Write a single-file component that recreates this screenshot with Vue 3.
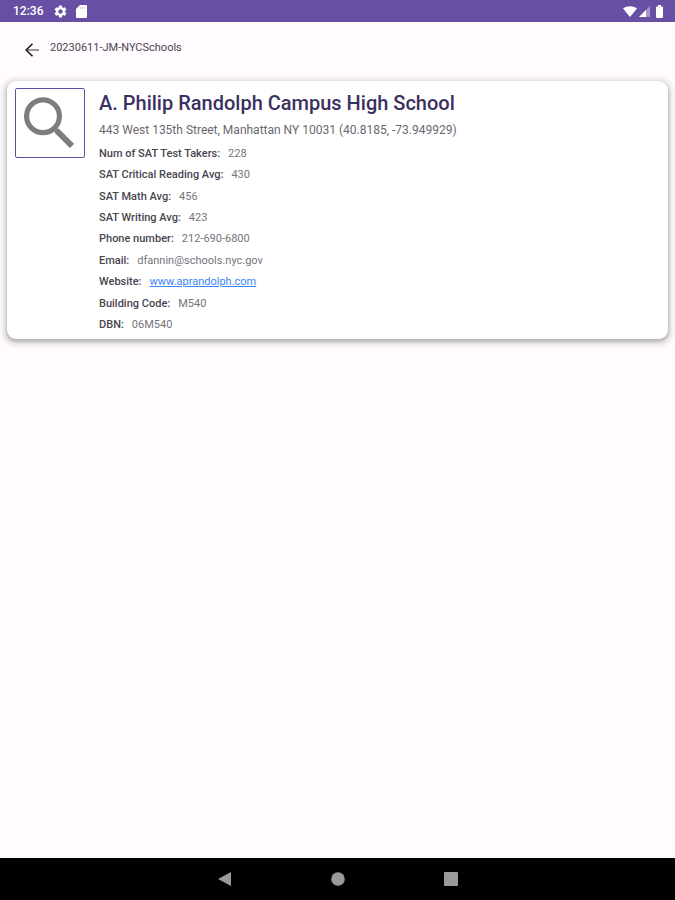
<script setup>
const school = {
  name: 'A. Philip Randolph Campus High School',
  address: '443 West 135th Street, Manhattan NY 10031 (40.8185, -73.949929)',
}

const details = [
  { label: 'Num of SAT Test Takers:', value: '228' },
  { label: 'SAT Critical Reading Avg:', value: '430' },
  { label: 'SAT Math Avg:', value: '456' },
  { label: 'SAT Writing Avg:', value: '423' },
  { label: 'Phone number:', value: '212-690-6800' },
  { label: 'Email:', value: 'dfannin@schools.nyc.gov' },
  { label: 'Website:', value: 'www.aprandolph.com', href: 'http://www.aprandolph.com' },
  { label: 'Building Code:', value: 'M540' },
  { label: 'DBN:', value: '06M540' },
]
</script>

<template>
  <div class="screen">
    <div class="status">
      <span class="clock">12:36</span>
      <svg class="gear" viewBox="0 0 24 24" width="15" height="15" aria-hidden="true">
        <path fill="#fff" d="M19.14 12.94c.04-.3.06-.61.06-.94 0-.32-.02-.64-.07-.94l2.03-1.58c.18-.14.23-.41.12-.61l-1.92-3.32c-.12-.22-.37-.29-.59-.22l-2.39.96c-.5-.38-1.03-.7-1.62-.94l-.36-2.54c-.04-.24-.24-.41-.48-.41h-3.84c-.24 0-.43.17-.47.41l-.36 2.54c-.59.24-1.13.57-1.62.94l-2.39-.96c-.22-.08-.47 0-.59.22L2.74 8.87c-.12.21-.08.47.12.61l2.03 1.58c-.05.3-.09.63-.09.94s.02.64.07.94l-2.03 1.58c-.18.14-.23.41-.12.61l1.92 3.32c.12.22.37.29.59.22l2.39-.96c.5.38 1.03.7 1.62.94l.36 2.54c.05.24.24.41.48.41h3.84c.24 0 .44-.17.47-.41l.36-2.54c.59-.24 1.13-.56 1.62-.94l2.39.96c.22.08.47 0 .59-.22l1.92-3.32c.12-.22.07-.47-.12-.61l-2.01-1.58zM12 15.6c-1.98 0-3.6-1.62-3.6-3.6s1.62-3.6 3.6-3.6 3.6 1.62 3.6 3.6-1.62 3.6-3.6 3.6z" />
      </svg>
      <svg class="sdcard" viewBox="0 0 11 13" width="11" height="13" aria-hidden="true">
        <path fill="#fff" d="M4 0h6a1 1 0 0 1 1 1v11a1 1 0 0 1-1 1H1a1 1 0 0 1-1-1V4z" />
        <path stroke="#6750a4" stroke-opacity=".3" d="M4.500 2v2M6.500 2v2M8.500 2v2" />
      </svg>
      <svg class="wifi" viewBox="0 0 14 11" width="14" height="11" aria-hidden="true">
        <path fill="#fff" d="M0 2.500C4 -.6 10 -.6 14 2.500L7 11z" />
      </svg>
      <svg class="signal" viewBox="0 0 11 11" width="11" height="11" aria-hidden="true">
        <path fill="#fff" fill-opacity=".4" d="M11 0v11H0z" />
        <path fill="#fff" d="M7 4v7H0z" />
      </svg>
      <svg class="battery" viewBox="0 0 7 13" width="7" height="13" aria-hidden="true">
        <path fill="#fff" d="M2 0h3v1.500h1a1 1 0 0 1 1 1V12a1 1 0 0 1-1 1H1a1 1 0 0 1-1-1V2.500a1 1 0 0 1 1-1h1z" />
      </svg>
    </div>

    <header class="bar">
      <button class="back" type="button" aria-label="Back">
        <svg viewBox="0 0 14 14" width="14" height="14" aria-hidden="true">
          <path d="M1 7h13" fill="none" stroke="#777579" stroke-width="1.500" />
          <path d="M7.500 .7L1.200 7l6.300 6.300" fill="none" stroke="#1c1b1f" stroke-width="1.600" />
        </svg>
      </button>
      <span class="app-name">20230611-JM-NYCSchools</span>
    </header>

    <main class="content">
      <article class="card">
        <div class="thumb">
          <svg viewBox="0 0 52 52" width="52" height="52" aria-hidden="true">
            <circle cx="19" cy="19.200" r="16.400" fill="none" stroke="#7d7d7d" stroke-width="5.200" />
            <path d="M32.500 33.500L48 49" stroke="#7d7d7d" stroke-width="6" />
            <path d="M30 31L34 35" stroke="#7d7d7d" stroke-width="4" />
          </svg>
        </div>
        <div class="info">
          <h1>{{ school.name }}</h1>
          <p class="address">{{ school.address }}</p>
          <dl class="details">
            <div v-for="item in details" :key="item.label" class="row">
              <dt>{{ item.label }}</dt>
              <dd>
                <a v-if="item.href" :href="item.href">{{ item.value }}</a>
                <template v-else>{{ item.value }}</template>
              </dd>
            </div>
          </dl>
        </div>
      </article>
    </main>

    <nav class="nav">
      <button type="button" aria-label="Go back">
        <svg viewBox="0 0 14 14" width="14" height="14" aria-hidden="true">
          <path fill="#9a9a9a" d="M13 0v14L0 7z" />
        </svg>
      </button>
      <button type="button" aria-label="Home">
        <svg viewBox="0 0 14 14" width="14" height="14" aria-hidden="true">
          <circle cx="7" cy="7" r="6.800" fill="#9a9a9a" />
        </svg>
      </button>
      <button type="button" aria-label="Recent apps">
        <svg viewBox="0 0 14 14" width="14" height="14" aria-hidden="true">
          <rect width="14" height="14" rx="1" fill="#9a9a9a" />
        </svg>
      </button>
    </nav>
  </div>
</template>

<style>
body {
  background: #fffbfe;
}
</style>

<style scoped>
.screen {
  display: flex;
  flex-direction: column;
  min-height: 100vh;
  background: #fffbfe;
  color: #49454f;
  font-family: Roboto, "Liberation Sans", sans-serif;
  font-size: 11px;
}

svg {
  display: block;
  overflow: visible;
}

button {
  display: flex;
  align-items: center;
  justify-content: center;
  padding: 0;
  border: 0;
  background: none;
}

.status {
  display: flex;
  align-items: center;
  height: 22px;
  padding: 0 12px 0 13px;
  background: #6750a4;
  color: #fff;
}

.clock {
  font-size: 12px;
  font-weight: 500;
  line-height: 22px;
}

.gear {
  margin-left: 10px;
}

.sdcard {
  margin-left: 8px;
}

.wifi {
  margin-left: auto;
}

.signal {
  margin-left: 2px;
}

.battery {
  margin-left: 6px;
}

.bar {
  display: flex;
  align-items: flex-start;
  gap: 11px;
  height: 39px;
  padding: 18px 25px 0;
}

.back {
  width: 14px;
  height: 20px;
}

.app-name {
  font-size: 11px;
  line-height: 16px;
}

.content {
  flex: 1;
  padding: 2px 7px;
}

.card {
  display: flex;
  align-items: flex-start;
  gap: 14px;
  min-height: 258px;
  box-sizing: border-box;
  padding: 7px 8px 3px;
  border-radius: 9px;
  background: #fff;
  box-shadow: 0 2px 3px 1px rgba(0, 0, 0, 0.2), 0 2px 4px 5px rgba(0, 0, 0, 0.09);
}

.thumb {
  display: flex;
  align-items: center;
  justify-content: center;
  width: 68px;
  height: 68px;
  border: 1px solid #5d51a5;
  border-radius: 2px;
}

.info {
  display: flex;
  flex: 1;
  flex-direction: column;
  align-self: stretch;
  min-width: 0;
}

h1 {
  margin: 0;
  color: #3b3060;
  font-size: 20px;
  font-weight: 500;
  line-height: 30px;
}

.address {
  margin: 3px 0;
  font-size: 12px;
  line-height: 19px;
  color: #6b6770;
}

.details {
  display: grid;
  flex: 1;
  grid-auto-rows: 1fr;
  margin: 0;
}

.row {
  display: flex;
  align-items: center;
  gap: 8px;
  line-height: 20px;
}

dt {
  font-weight: 500;
}

dd {
  margin: 0;
  color: #77737c;
}

a {
  color: #3b86f5;
}

.nav {
  display: flex;
  align-items: center;
  justify-content: center;
  gap: 99px;
  height: 42px;
  background: #000;
}

.nav button {
  width: 14px;
  height: 14px;
}
</style>
